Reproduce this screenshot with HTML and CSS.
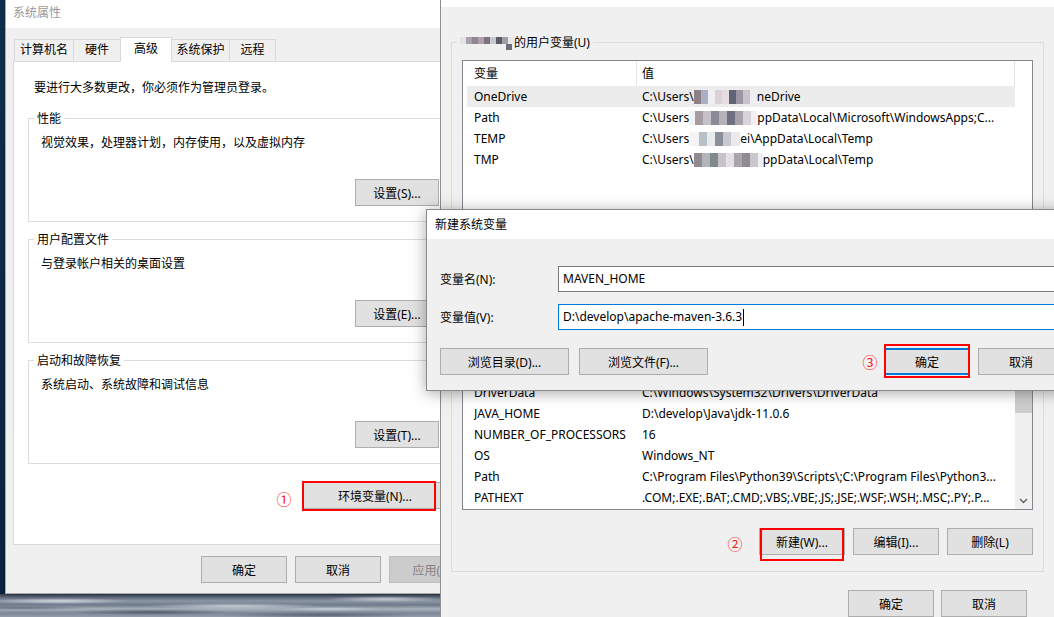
FILE: index.html
```html
<!DOCTYPE html>
<html lang="zh-CN">
<head>
<meta charset="utf-8">
<title>系统属性 - 环境变量</title>
<link rel="stylesheet" href="styles.css">
</head>
<body>
<div class="desktop">

  <section class="win win-sys">
    <header class="titlebar">系统属性</header>
    <div class="sys-body">
      <div class="tabs">
        <div class="tab tab-1">计算机名</div>
        <div class="tab tab-2">硬件</div>
        <div class="tab tab-3 tab-active">高级</div>
        <div class="tab tab-4">系统保护</div>
        <div class="tab tab-5">远程</div>
      </div>
      <div class="tab-panel">
        <p class="intro">要进行大多数更改，你必须作为管理员登录。</p>
        <div class="group">
          <div class="group-title">性能</div>
          <p class="group-desc">视觉效果，处理器计划，内存使用，以及虚拟内存</p>
          <div class="group-actions"><button class="btn btn-setting">设置(S)...</button></div>
        </div>
        <div class="group">
          <div class="group-title">用户配置文件</div>
          <p class="group-desc">与登录帐户相关的桌面设置</p>
          <div class="group-actions"><button class="btn btn-setting">设置(E)...</button></div>
        </div>
        <div class="group">
          <div class="group-title">启动和故障恢复</div>
          <p class="group-desc">系统启动、系统故障和调试信息</p>
          <div class="group-actions"><button class="btn btn-setting">设置(T)...</button></div>
        </div>
        <div class="env-row"><button class="btn btn-env">环境变量(N)...</button></div>
      </div>
      <div class="sys-actions">
        <button class="btn btn-std">确定</button>
        <button class="btn btn-std">取消</button>
        <button class="btn btn-std btn-disabled">应用(A)</button>
      </div>
    </div>
  </section>

  <section class="win win-env">
    <header class="titlebar"></header>
    <div class="env-body">
      <div class="group group-user">
        <div class="group-title"><span class="mosaic mosaic-title"></span>的用户变量(U)</div>
        <div class="list list-user">
          <div class="list-main">
            <div class="list-head"><div>变量</div><div>值</div></div>
            <div class="list-row row-selected"><span>OneDrive</span><span>C:\Users\<span class="mosaic mosaic-a"></span>neDrive</span></div>
            <div class="list-row"><span>Path</span><span>C:\Users<span class="mosaic mosaic-b"></span>ppData\Local\Microsoft\WindowsApps;C...</span></div>
            <div class="list-row"><span>TEMP</span><span>C:\Users<span class="mosaic mosaic-c"></span>ei\AppData\Local\Temp</span></div>
            <div class="list-row"><span>TMP</span><span>C:\Users\<span class="mosaic mosaic-d"></span>ppData\Local\Temp</span></div>
          </div>
        </div>
      </div>

      <div class="group group-system">
        <div class="list list-system">
          <div class="list-main list-scrolled">
            <div class="list-row"><span>DriverData</span><span>C:\Windows\System32\Drivers\DriverData</span></div>
            <div class="list-row"><span>JAVA_HOME</span><span>D:\develop\Java\jdk-11.0.6</span></div>
            <div class="list-row"><span>NUMBER_OF_PROCESSORS</span><span>16</span></div>
            <div class="list-row"><span>OS</span><span>Windows_NT</span></div>
            <div class="list-row"><span>Path</span><span>C:\Program Files\Python39\Scripts\;C:\Program Files\Python3...</span></div>
            <div class="list-row"><span>PATHEXT</span><span>.COM;.EXE;.BAT;.CMD;.VBS;.VBE;.JS;.JSE;.WSF;.WSH;.MSC;.PY;.P...</span></div>
          </div>
          <div class="scrollbar">
            <div class="scroll-thumb"></div>
            <div class="scroll-arrow">
              <svg width="17" height="17" viewBox="0 0 17 17"><polyline points="5,7 8.5,10.5 12,7" fill="none" stroke="#606060" stroke-width="1.4"/></svg>
            </div>
          </div>
        </div>
        <div class="list-actions">
          <button class="btn btn-std">新建(W)...</button>
          <button class="btn btn-std">编辑(I)...</button>
          <button class="btn btn-std">删除(L)</button>
        </div>
      </div>

      <div class="env-actions">
        <button class="btn btn-std">确定</button>
        <button class="btn btn-std">取消</button>
      </div>
    </div>
  </section>

  <section class="win dialog">
    <header class="titlebar">新建系统变量</header>
    <div class="dlg-body">
      <div class="field">
        <label>变量名(N):</label>
        <div class="input">MAVEN_HOME</div>
      </div>
      <div class="field">
        <label>变量值(V):</label>
        <div class="input input-focus">D:\develop\apache-maven-3.6.3<span class="caret"></span></div>
      </div>
      <div class="dlg-buttons">
        <button class="btn btn-browse">浏览目录(D)...</button>
        <button class="btn btn-browse">浏览文件(F)...</button>
        <button class="btn btn-ok">确定</button>
        <button class="btn btn-cancel">取消</button>
      </div>
    </div>
  </section>

  <div class="mark mark-1"></div>
  <div class="mark mark-2"></div>
  <div class="mark mark-3"></div>
  <div class="step step-1">①</div>
  <div class="step step-2">②</div>
  <div class="step step-3">③</div>
</div>
</body>
</html>
```

FILE: styles.css
```css
* { box-sizing: border-box; }

html, body { margin: 0; padding: 0; }

body {
  width: 1054px;
  height: 617px;
  overflow: hidden;
  font-family: "Noto Sans", "Noto Sans CJK SC", sans-serif;
  font-size: 12px;
  color: #000;
  background:
    radial-gradient(70px 3px at 60px 7px, rgba(222, 228, 235, 0.85), transparent) left bottom / 100% 23px no-repeat,
    radial-gradient(90px 3px at 235px 12px, rgba(222, 228, 235, 0.75), transparent) left bottom / 100% 23px no-repeat,
    radial-gradient(60px 3px at 385px 5px, rgba(222, 228, 235, 0.8), transparent) left bottom / 100% 23px no-repeat,
    radial-gradient(50px 2px at 330px 15px, rgba(222, 228, 235, 0.6), transparent) left bottom / 100% 23px no-repeat,
    radial-gradient(80px 3px at 150px 18px, rgba(40, 50, 65, 0.55), transparent) left bottom / 100% 23px no-repeat,
    radial-gradient(100px 3px at 320px 21px, rgba(40, 50, 65, 0.45), transparent) left bottom / 100% 23px no-repeat,
    radial-gradient(70px 2px at 20px 14px, rgba(40, 50, 65, 0.45), transparent) left bottom / 100% 23px no-repeat,
    linear-gradient(180deg, #323e4f 0px, #5b6778 3px, #8c97a5 7px, #6e7a8b 11px, #a9b2bd 15px, #7b8797 19px, #939dab 23px) left bottom / 100% 23px no-repeat,
    linear-gradient(180deg, #10304f, #0b2440);
}

.desktop {
  position: relative;
  width: 1054px;
  height: 617px;
}

p { margin: 0; }

/* ---------- generic window ---------- */
.win {
  position: absolute;
  overflow: hidden;
  background: #f0f0f0;
}

.titlebar {
  background: #fff;
}

.btn {
  display: block;
  height: 27px;
  padding: 0;
  margin: 0;
  font-family: inherit;
  font-size: 12px;
  color: #000;
  background: #e1e1e1;
  border: 1px solid #adadad;
  text-align: center;
  white-space: nowrap;
}

.btn-std { width: 86px; }

.btn-disabled {
  background: #cccccc;
  border-color: #bfbfbf;
  color: #838383;
}

/* ---------- group boxes ---------- */
.group {
  border: 1px solid #dcdcdc;
}

.group-title {
  display: table;
  line-height: 16px;
  margin-top: -8px;
  padding: 0 3px;
  background: #fff;
}

/* ---------- system properties window ---------- */
.win-sys {
  left: 5px;
  top: 0;
  width: 482px;
  height: 594px;
  border: 1px solid #a9a9a9;
  border-top: 0;
  box-shadow: 0 0 6px rgba(0, 0, 0, 0.3);
}

.win-sys .titlebar {
  height: 28px;
  line-height: 26px;
  padding-left: 7px;
  color: #999;
}

.sys-body {
  padding: 9px 11px 0 7px;
}

.tabs {
  display: flex;
  align-items: flex-end;
  height: 24px;
  margin-left: 1px;
}

.tab {
  height: 22px;
  line-height: 20px;
  margin-left: -1px;
  border: 1px solid #d9d9d9;
  border-bottom: 0;
  background: #f0f0f0;
  text-align: center;
}

.tab:first-child { margin-left: 0; }

.tab-active {
  position: relative;
  z-index: 1;
  height: 25px;
  line-height: 21px;
  margin-bottom: -1px;
  background: #fff;
}

.tab-1 { width: 60px; }
.tab-2 { width: 48px; }
.tab-3 { width: 52px; }
.tab-4 { width: 59px; }
.tab-5 { width: 47px; }

.tab-panel {
  height: 484px;
  padding: 18px 14px 0;
  background: #fff;
  border: 1px solid #d9d9d9;
}

.intro {
  line-height: 16px;
  margin: 0 0 22px 6px;
}

.tab-panel .group {
  margin-top: 17px;
  padding: 0 0 15px 12px;
}

.tab-panel .group-title {
  margin-left: -7px;
}

.group-desc {
  line-height: 16px;
  margin-top: 8px;
}

.group-actions {
  display: flex;
  justify-content: flex-end;
  margin-top: 28px;
  padding-right: 20px;
}

.btn-setting { width: 84px; }

.env-row {
  display: flex;
  justify-content: flex-end;
  margin-top: 18px;
  padding-right: 13px;
}

.btn-env { width: 144px; }

.sys-actions {
  display: flex;
  justify-content: flex-end;
  gap: 8px;
  margin-top: 11px;
}

/* ---------- environment variables window ---------- */
.win-env {
  left: 440px;
  top: 0;
  width: 614px;
  height: 640px;
  border-left: 1px solid #8f8f8f;
}

.win-env .titlebar { height: 7px; }

.env-body {
  padding: 0 10px;
}

.env-body .group {
  padding: 0 10px 10px;
}

.env-body .group-title {
  margin-left: -5px;
  background: #f0f0f0;
}

.group-user { margin-top: 35px; }

.group-system {
  margin-top: 12px;
  padding-top: 20px !important;
  padding-bottom: 16px !important;
}

.mosaic {
  display: inline-block;
  height: 14px;
  vertical-align: -3px;
}

.mosaic-title {
  width: 54px;
  height: 15px;
  background:
    linear-gradient(90deg, transparent 0 46px, #6f6b78 46px 52px, transparent 52px) 0 9px / 100% 6px no-repeat,
    linear-gradient(90deg, #e4e2e6 0 6px, #a7a1aa 6px 12px, #8d8693 12px 18px, #b49ea8 18px 24px, #7a7480 24px 30px, #cdc7cf 30px 36px, #5d5a66 36px 42px, #a29ea8 42px 48px, #e9e7eb 48px) 0 2px / 100% 7px no-repeat;
}

.mosaic-a {
  width: 63px;
  background: linear-gradient(90deg, #8f7f86 0 7px, #aab0c4 7px 14px, #f2eff2 14px 21px, #d9d1d6 21px 28px, #e5dde0 28px 35px, #5f6474 35px 42px, #9a97a3 42px 49px, #c8c4cc 49px 56px, #f0eef0 56px);
}

.mosaic-b {
  width: 68px;
  background: linear-gradient(90deg, #f3f2f4 0 6px, #a49ca2 6px 14px, #c7c2c8 14px 22px, #8d8a98 22px 30px, #b7b2ba 30px 38px, #6e7080 38px 46px, #a6a2aa 46px 54px, #d7d3d8 54px 62px, #f1eff1 62px);
}

.mosaic-c {
  width: 51px;
  background: linear-gradient(90deg, #f5f5f6 0 10px, #b8c0c8 10px 18px, #e8eaec 18px 26px, #8c8f9a 26px 34px, #c7c9d0 34px 42px, #ebe9ee 42px);
}

.mosaic-d {
  width: 69px;
  background: linear-gradient(90deg, #918a90 0 8px, #b3b5bd 8px 16px, #7e8a8c 16px 24px, #c5c2cc 24px 32px, #e6dfe6 32px 40px, #a9a3aa 40px 48px, #8c8a94 48px 56px, #c9c6cc 56px 64px, #f0eef0 64px);
}

.list {
  display: flex;
  margin-top: 9px;
  border: 1px solid #828790;
  background: #fff;
  overflow: hidden;
}

.list-system { margin-top: 0; }

.list-user { height: 170px; }
.list-system { height: 236px; }

.list-main { width: 552px; }

.list-scrolled { padding-top: 107px; }

.list-head {
  display: grid;
  grid-template-columns: 174px 378px;
  height: 25px;
}

.list-head > div {
  line-height: 25px;
  border-right: 1px solid #e5e5e5;
}

.list-head > div:first-child { padding-left: 11px; }
.list-head > div:last-child { padding-left: 5px; }

.list-row {
  display: grid;
  grid-template-columns: 168px 373px;
  height: 21px;
  line-height: 21px;
  margin-left: 4px;
  padding-left: 7px;
  white-space: nowrap;
}

.list-row > span { overflow: hidden; }

.row-selected { background: #ececec; }

.scrollbar {
  display: flex;
  flex-direction: column;
  width: 17px;
  background: #f0f0f0;
}

.scroll-thumb {
  height: 121px;
  margin-top: 17px;
  background: #cdcdcd;
}

.scroll-arrow {
  height: 17px;
  margin-top: auto;
}

.scroll-arrow svg { display: block; }

.list-actions {
  display: flex;
  justify-content: flex-end;
  gap: 8px;
  margin-top: 18px;
}

.env-actions {
  display: flex;
  justify-content: flex-end;
  gap: 7px;
  margin-top: 18px;
  padding-right: 17px;
}

/* ---------- new variable dialog ---------- */
.dialog {
  left: 426px;
  top: 209px;
  width: 660px;
  height: 182px;
  border: 1px solid #8a8a8a;
  box-shadow: 0 2px 14px rgba(0, 0, 0, 0.35);
}

.dialog .titlebar {
  height: 29px;
  line-height: 29px;
  padding-left: 8px;
}

.dlg-body {
  padding: 27px 21px 0 13px;
}

.field {
  display: grid;
  grid-template-columns: 118px 1fr;
  align-items: center;
}

.field + .field { margin-top: 12px; }

.input {
  height: 26px;
  line-height: 24px;
  padding-left: 4px;
  background: #fff;
  border: 1px solid #7a7a7a;
  white-space: nowrap;
}

.input-focus { border-color: #0078d7; }

.caret {
  display: inline-block;
  width: 1px;
  height: 17px;
  margin-left: 1px;
  background: #000;
  vertical-align: middle;
}

.dlg-buttons {
  display: flex;
  margin-top: 18px;
}

.btn-browse { width: 129px; }
.btn-browse + .btn-browse { margin-left: 10px; }

.btn-ok {
  width: 86px;
  margin-left: auto;
  border-color: #0078d7;
  box-shadow: inset 0 0 0 1px #0078d7;
}

.btn-cancel {
  width: 86px;
  margin-left: 8px;
}

/* ---------- annotations ---------- */
.mark {
  position: absolute;
  z-index: 5;
  border: 2px solid #ff0000;
}

.mark-1 { left: 302px; top: 481px; width: 134px; height: 30px; }
.mark-2 { left: 760px; top: 528px; width: 84px; height: 33px; }
.mark-3 { left: 884px; top: 344px; width: 86px; height: 34px; }

.step {
  position: absolute;
  z-index: 5;
  width: 18px;
  line-height: 16px;
  text-align: center;
  font-family: "Noto Sans CJK SC", sans-serif;
  font-size: 15px;
  color: #ff1a1a;
}

.step-1 { left: 275px; top: 491px; }
.step-2 { left: 726px; top: 536px; }
.step-3 { left: 861px; top: 354px; }
```
